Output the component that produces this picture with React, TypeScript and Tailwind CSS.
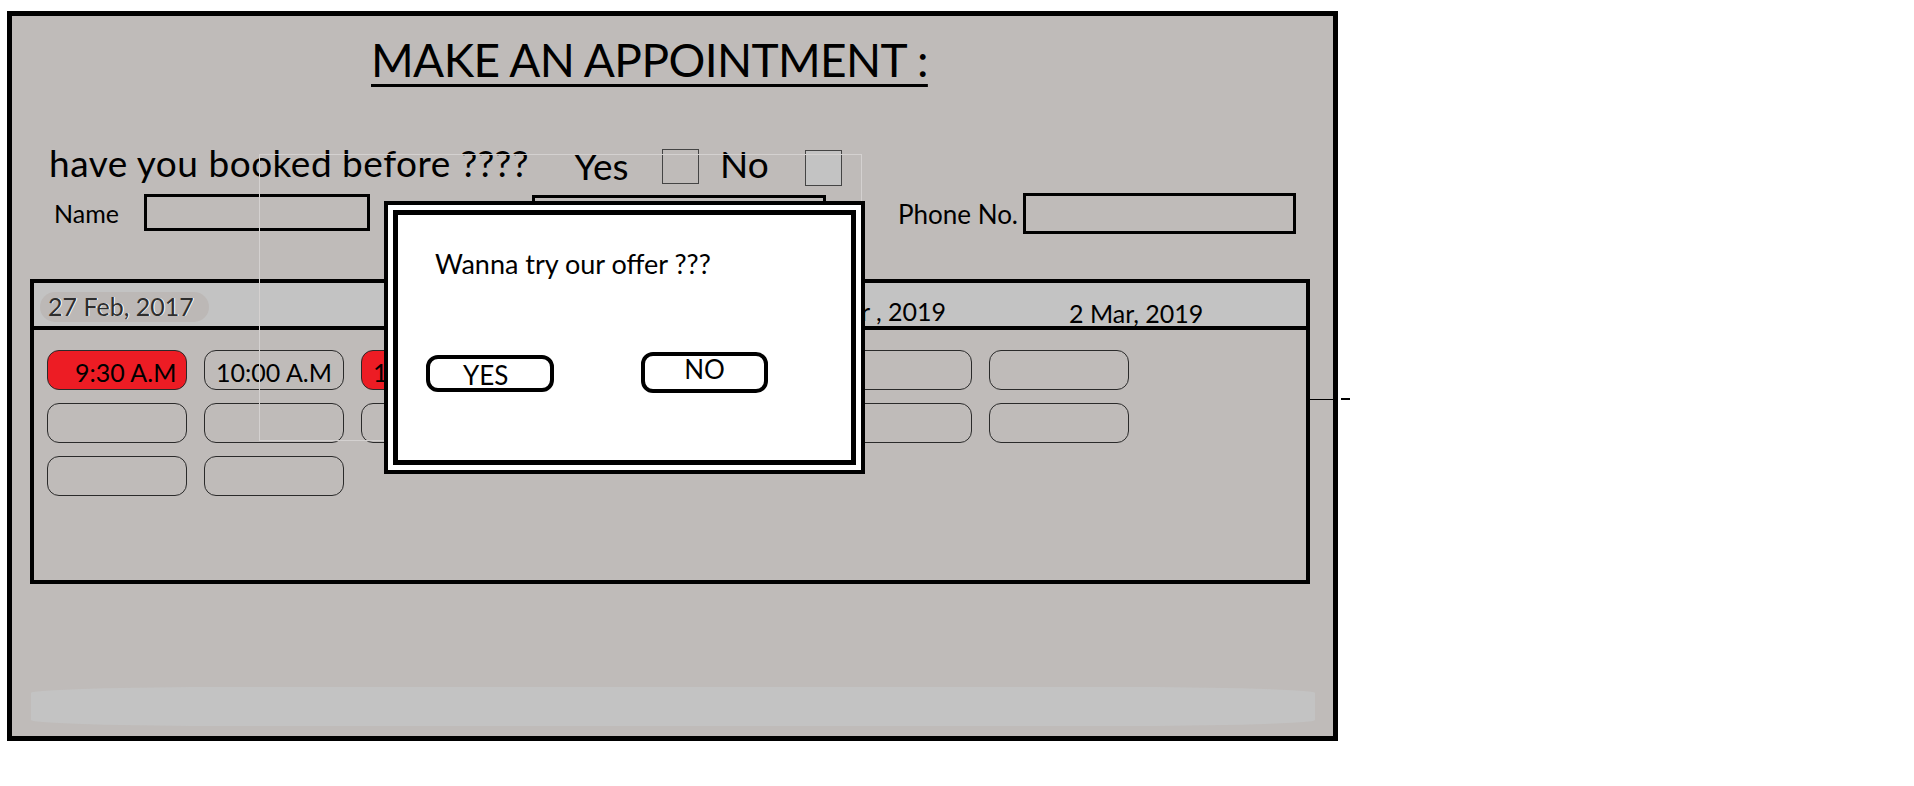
export default function App() {
  const slot =
    "h-[40px] rounded-[12px] border border-[#2a2a2a] text-[25px] leading-[25px] text-black pt-[9px]";
  const empty = `${slot} bg-transparent`;
  return (
    <div className="relative w-[1914px] h-[786px] bg-white pl-[7px] pt-[11px] font-[Lato,sans-serif] text-black overflow-hidden">
      {/* main frame */}
      <div className="relative w-[1331px] h-[730px] border-[5px] border-black bg-[#bfbbb9] flex flex-col">
        {/* title */}
        <div className="ml-[359px] mt-[21px] h-[46px] text-[46px] leading-[46px] tracking-[-0.6px] whitespace-nowrap underline decoration-[3px] underline-offset-[7px]">
          MAKE AN APPOINTMENT :
        </div>

        {/* booked before row */}
        <div className="mt-[61px] flex items-start h-[42px]">
          <div className="ml-[37px] w-[525px] text-[37px] leading-[37px] tracking-[0.5px] whitespace-nowrap">
            have you booked before ????
          </div>
          <div className="w-[88px] mt-[3px] text-[37px] leading-[37px]">Yes</div>
          <div className="w-[37px] h-[35px] mt-[5px] border border-[#444]" />
          <div className="ml-[21px] w-[85px] mt-[1px] text-[37px] leading-[37px]">No</div>
          <div className="w-[37px] h-[36px] mt-[6px] border border-[#444] bg-[#c3c3c3]" />
        </div>

        {/* fields row */}
        <div className="mt-[7px] flex items-start h-[41px]">
          <div className="ml-[42px] w-[90px] mt-[8px] text-[25px] leading-[25px]">Name</div>
          <div className="w-[226px] h-[37px] mt-[1px] border-[3px] border-black" />
          <div className="ml-[162px] w-[294px] h-[38px] mt-[2px] border-[3px] border-black" />
          <div className="ml-[72px] w-[125px] mt-[8px] text-[26px] leading-[26px] whitespace-nowrap">
            Phone No.
          </div>
          <div className="w-[273px] h-[41px] border-[3px] border-black" />
        </div>

        {/* calendar panel */}
        <div className="mt-[45px] ml-[18px] w-[1280px] h-[305px] border-[4px] border-black flex flex-col">
          <div className="h-[47px] bg-[#c3c3c3] border-b-[4px] border-black flex items-start text-[25px] leading-[25px] whitespace-nowrap">
            <div className="ml-[6px] mt-[9px] w-[169px] h-[30px] rounded-full bg-[#bcb8b6] pl-[8px] pt-[2px] text-[#2e2e2e] [text-shadow:1px_0_0_#ffffff]">
              27 Feb, 2017
            </div>
            <div className="ml-[491px] mt-[16px] w-[246px] text-right">1 Mar , 2019</div>
            <div className="ml-[123px] mt-[18px]">2 Mar, 2019</div>
          </div>
          <div className="ml-[13px] mt-[20px] grid grid-cols-[repeat(7,140px)] auto-rows-[40px] gap-x-[17px] gap-y-[13px]">
            <div className={`${slot} bg-[#ed1c24] pl-[27px] whitespace-nowrap`}>9:30 A.M</div>
            <div className={`${slot} text-center whitespace-nowrap`}>10:00 A.M</div>
            <div className={`${slot} bg-[#ed1c24] text-center whitespace-nowrap`}>10:30 A.M</div>
            <div className={empty} />
            <div className={empty} />
            <div className={empty} />
            <div className={empty} />
            <div className={empty} />
            <div className={empty} />
            <div className={empty} />
            <div className={empty} />
            <div className={empty} />
            <div className={empty} />
            <div className={empty} />
            <div className={empty} />
            <div className={empty} />
          </div>
        </div>

        {/* footer bar */}
        <div className="mt-[103px] ml-[19px] w-[1284px] h-[39px] bg-[#c3c3c3] rounded-[200px/6px]" />

        {/* faint selection rectangle */}
        <div className="absolute left-[247px] top-[138px] w-[603px] h-[287px] border border-[#d4d1d0] pointer-events-none" />

        {/* modal */}
        <div className="absolute left-[372px] top-[185px] w-[481px] h-[273px] border-[4px] border-black bg-white p-[5px]">
          <div className="w-full h-full border-[5px] border-black bg-white flex flex-col">
            <div className="ml-[37px] mt-[35px] text-[27px] leading-[27px] whitespace-nowrap">
              Wanna try our offer ???
            </div>
            <div className="flex items-start mt-[75px]">
              <div className="ml-[28px] mt-[3px] w-[128px] h-[37px] border-[4px] border-black rounded-[12px] pl-[33px] pt-[3px] text-[26px] leading-[26px]">
                YES
              </div>
              <div className="ml-[87px] w-[127px] h-[41px] border-[4px] border-black rounded-[12px] text-center pt-[0px] text-[26px] leading-[26px]">
                NO
              </div>
            </div>
          </div>
        </div>
      </div>

      {/* stray line on right */}
      <div className="absolute left-[1310px] top-[399px] w-[23px] h-[1px] bg-black" />
      <div className="absolute left-[1341px] top-[398px] w-[9px] h-[2px] bg-black" />
    </div>
  );
}
